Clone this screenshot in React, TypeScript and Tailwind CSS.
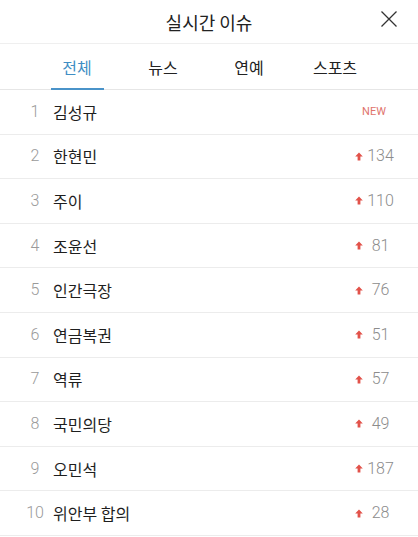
import React, { useState } from 'react';

type Issue = {
    rank: number;
    keyword: string;
    change: number | 'new';
};

const issues: Issue[] = [
    { rank: 1, keyword: '김성규', change: 'new' },
    { rank: 2, keyword: '한현민', change: 134 },
    { rank: 3, keyword: '주이', change: 110 },
    { rank: 4, keyword: '조윤선', change: 81 },
    { rank: 5, keyword: '인간극장', change: 76 },
    { rank: 6, keyword: '연금복권', change: 51 },
    { rank: 7, keyword: '역류', change: 57 },
    { rank: 8, keyword: '국민의당', change: 49 },
    { rank: 9, keyword: '오민석', change: 187 },
    { rank: 10, keyword: '위안부 합의', change: 28 },
];

const tabs = ['전체', '뉴스', '연예', '스포츠'];

const UpArrow = () => (
    <svg width="8" height="9" viewBox="0 0 8 9" className="shrink-0">
        <path d="M4 0.5L7.8 4.6H5.4V8.6H2.6V4.6H0.2Z" fill="#e2524a" />
    </svg>
);

const App = () => {
    const [active, setActive] = useState(0);

    return (
        <div className="w-[418px] h-[537px] bg-white overflow-hidden font-['Noto_Sans_CJK_KR','Noto_Sans',sans-serif]">
            {/* Header */}
            <div className="relative h-[44px] border-b border-[#efefef] flex items-center justify-center">
                <h1 className="text-[18px] text-[#222] leading-none">실시간 이슈</h1>
                <button className="absolute right-[20px] top-[10px] p-0" aria-label="닫기">
                    <svg width="18" height="18" viewBox="0 0 18 18" stroke="#333" strokeWidth="1.3" fill="none">
                        <path d="M1.5 1.5L16.5 16.5M16.5 1.5L1.5 16.5" />
                    </svg>
                </button>
            </div>

            {/* Tabs */}
            <div className="h-[46px] border-b border-[#e6e6e6] flex items-stretch pl-[34px] pr-[40px]">
                {tabs.map((tab, i) => (
                    <button
                        key={tab}
                        onClick={() => setActive(i)}
                        className="relative flex-1 flex items-center justify-center"
                    >
                        <span className={`text-[16px] leading-none ${i === active ? 'text-[#3f8ec4]' : 'text-[#222]'}`}>
                            {tab}
                        </span>
                        {i === active && (
                            <span className="absolute bottom-[-1px] left-[17px] right-[16px] h-[2px] bg-[#4a93c9]" />
                        )}
                    </button>
                ))}
            </div>

            {/* List */}
            <ul>
                {issues.map((item) => (
                    <li
                        key={item.rank}
                        className="h-[44.6px] border-b border-[#ececec] flex items-center"
                    >
                        <span className="w-[50px] pl-[20px] text-center text-[16px] text-[#9a9a9a] font-['Roboto',sans-serif] font-light">
                            {item.rank}
                        </span>
                        <span className="flex-1 pl-[3px] text-[16px] text-[#1e1e1e]">{item.keyword}</span>
                        {item.change === 'new' ? (
                            <span className="w-[48px] mr-[20px] text-center text-[11px] text-[#e0736c] font-['Roboto',sans-serif]">
                                NEW
                            </span>
                        ) : (
                            <span className="w-[48px] mr-[20px] flex items-center pl-[5px]">
                                <UpArrow />
                                <span className="flex-1 text-center text-[16px] text-[#8c8c8c] font-['Roboto',sans-serif] font-light">
                                    {item.change}
                                </span>
                            </span>
                        )}
                    </li>
                ))}
            </ul>
        </div>
    );
};

export default App;
